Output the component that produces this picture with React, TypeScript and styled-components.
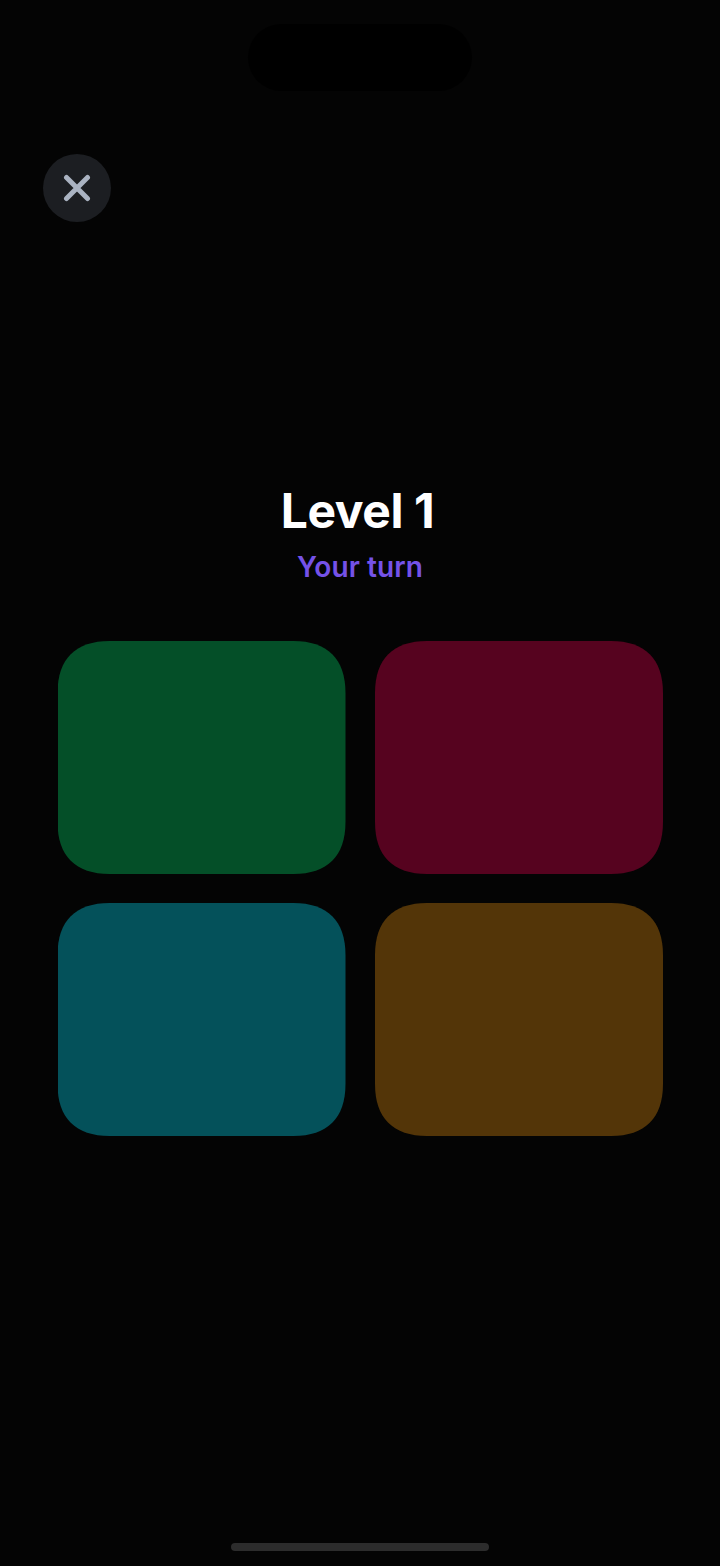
import React from 'react';
import styled, { createGlobalStyle } from 'styled-components';

const GlobalStyle = createGlobalStyle`
  html, body {
    margin: 0;
    padding: 0;
    background: #040404;
  }
`;

const Screen = styled.div`
  width: 720px;
  height: 1566px;
  overflow: hidden;
  background: #040404;
  display: flex;
  flex-direction: column;
  font-family: Inter, "Liberation Sans", sans-serif;
`;

const Island = styled.div`
  align-self: center;
  width: 224px;
  height: 67px;
  margin-top: 24px;
  border-radius: 34px;
  background: #000000;
`;

const CloseButton = styled.button`
  width: 68px;
  height: 68px;
  margin: 63px 0 0 43px;
  padding: 0;
  border: 0;
  border-radius: 50%;
  background: #1c1e22;
  display: flex;
  align-items: center;
  justify-content: center;
`;

const Heading = styled.div`
  margin-top: 260px;
  display: flex;
  flex-direction: column;
  align-items: center;
`;

const Title = styled.h1`
  margin: 0 5px 0 0;
  font-size: 48px;
  line-height: 58px;
  font-weight: 700;
  letter-spacing: -0.4px;
  color: #ffffff;
`;

const Subtitle = styled.p`
  margin: 10px 0 0;
  font-size: 28px;
  line-height: 34px;
  font-weight: 600;
  letter-spacing: 0.1px;
  color: #7552e8;
`;

const Pads = styled.div`
  margin: 57px 57px 0 57.5px;
  display: grid;
  grid-template-columns: 288px 288px;
  grid-auto-rows: 233px;
  gap: 29px 29.5px;
`;

// continuous-curve corners, like the iOS rounded rectangle
const padShape =
  'M0 52C0 18 18 0 52 0H236C270 0 288 18 288 52V181C288 215 270 233 236 233H52C18 233 0 215 0 181Z';

const Pad = styled.div<{ $color: string }>`
  clip-path: path('${padShape}');
  background: ${(props) => props.$color};
`;

const HomeBar = styled.div`
  align-self: center;
  width: 258px;
  height: 8px;
  margin-top: auto;
  margin-bottom: 15px;
  border-radius: 4px;
  background: #2c2c2c;
`;

const padColors = ['#044f28', '#56031f', '#04515a', '#533508'];

function App() {
  return (
    <Screen>
      <GlobalStyle />
      <Island />
      <CloseButton aria-label="Close">
        <svg width="28" height="28" viewBox="0 0 28 28" fill="none">
          <path
            d="M3.5 3.5L24.5 24.5M24.5 3.5L3.5 24.5"
            stroke="#aab3c2"
            strokeWidth="5"
            strokeLinecap="round"
          />
        </svg>
      </CloseButton>
      <Heading>
        <Title>Level 1</Title>
        <Subtitle>Your turn</Subtitle>
      </Heading>
      <Pads>
        {padColors.map((color) => (
          <Pad key={color} $color={color} />
        ))}
      </Pads>
      <HomeBar />
    </Screen>
  );
}

export default App;
